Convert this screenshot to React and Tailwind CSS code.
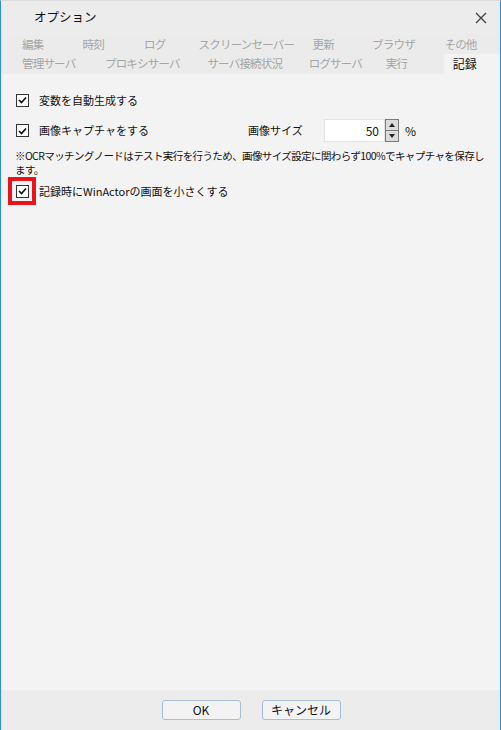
import React from 'react';

const font = { fontFamily: '"Noto Sans CJK JP", "Noto Sans", sans-serif' };

const tabsTop = [
    { label: '編集', w: 'w-[61px]' },
    { label: '時刻', w: 'w-[62px]' },
    { label: 'ログ', w: 'w-[55px]' },
    { label: 'スクリーンセーバー', w: 'w-[115px]' },
    { label: '更新', w: 'w-[60px]' },
    { label: 'ブラウザ', w: 'w-[73px]' },
    { label: 'その他', w: 'w-[56px]' },
];

const tabsBottom = [
    { label: '管理サーバ', w: 'w-[86px]' },
    { label: 'プロキシサーバ', w: 'w-[100px]' },
    { label: 'サーバ接続状況', w: 'w-[111px]' },
    { label: 'ログサーバ', w: 'w-[80px]' },
    { label: '実行', w: 'w-[60px]' },
];

const Check = () => (
    <div className="w-[13px] h-[13px] border border-[#333] bg-white flex items-center justify-center shrink-0">
        <svg width="9" height="8" viewBox="0 0 9 8">
            <path d="M1 4 L3.5 6.5 L8 1.5" fill="none" stroke="#111" strokeWidth="1.7" />
        </svg>
    </div>
);

export default function App() {
    return (
        <div style={font} className="w-[501px] h-[730px] flex flex-col bg-[#f3f3f3] border-x border-[#2a8ce8] border-t border-t-[#dcdcdc] text-[#111] overflow-hidden">
            {/* title bar */}
            <div className="h-[33px] bg-[#ececec] flex items-center justify-between pl-[33px] pr-[13px] shrink-0">
                <span className="text-[12.5px]">オプション</span>
                <svg width="12" height="12" viewBox="0 0 12 12">
                    <path d="M1 1 L11 11 M11 1 L1 11" stroke="#444" strokeWidth="1.4" />
                </svg>
            </div>

            {/* tabs */}
            <div className="bg-[#ebebeb] pl-[21px] pt-[1px] text-[11.5px] tracking-[-0.8px] text-[#a5a5a5] shrink-0">
                <div className="flex h-[19px] items-center">
                    {tabsTop.map((t) => (
                        <div key={t.label} className={`${t.w} whitespace-nowrap`}>{t.label}</div>
                    ))}
                </div>
                <div className="flex h-[20px] items-center">
                    {tabsBottom.map((t, i) => (
                        <div key={t.label} className={`${t.w} whitespace-nowrap ${i === 2 ? 'pl-[6px]' : ''}`}>{t.label}</div>
                    ))}
                    <div className="bg-[#f3f3f3] h-full w-[58px] flex items-center pl-[9px] text-[#111] text-[12px] tracking-normal">記録</div>
                </div>
            </div>

            {/* content */}
            <div className="flex-1 text-[11px] pt-[18px]">
                <div className="flex items-center gap-[10px] pl-[15px] h-[16px]">
                    <Check />
                    <span>変数を自動生成する</span>
                </div>
                <div className="flex items-center pl-[15px] mt-[11px] h-[23px]">
                    <Check />
                    <span className="ml-[10px] w-[209px]">画像キャプチャをする</span>
                    <span className="w-[76px]">画像サイズ</span>
                    <div className="flex h-[23px]">
                        <div className="w-[61px] bg-white border border-[#e3e3e3] flex items-center justify-end pr-[5px] text-[12px]">50</div>
                        <div className="flex flex-col w-[14px] border border-[#7a7a7a]">
                            <div className="flex-1 bg-[#dcdcdc] flex items-center justify-center border-b border-[#7a7a7a]">
                                <svg width="6" height="4" viewBox="0 0 6 4"><path d="M0 4 L3 0 L6 4 Z" fill="#222" /></svg>
                            </div>
                            <div className="flex-1 bg-[#dcdcdc] flex items-center justify-center">
                                <svg width="6" height="4" viewBox="0 0 6 4"><path d="M0 0 L6 0 L3 4 Z" fill="#222" /></svg>
                            </div>
                        </div>
                    </div>
                    <span className="ml-[6px] text-[12px]">%</span>
                </div>
                <div className="pl-[14px] mt-[7px] text-[10.5px] leading-[14px] whitespace-nowrap tracking-[-0.6px]">
                    ※OCRマッチングノードはテスト実行を行うため、画像サイズ設定に関わらず100%でキャプチャを保存し
                    <br />
                    ます。
                </div>
                <div className="flex items-center ml-[7px] mt-[0px]">
                    <div className="w-[28px] h-[28px] border-[4px] border-[#e8141b] flex items-center justify-center">
                        <Check />
                    </div>
                    <span className="ml-[3px]">記録時にWinActorの画面を小さくする</span>
                </div>
            </div>

            {/* footer */}
            <div className="h-[40px] bg-[#ececec] flex items-start justify-center gap-[21px] pt-[10px] pl-[1px] shrink-0">
                <button className="w-[79px] h-[20px] bg-[#f3f3f3] border border-[#a9bdd6] rounded-[3px] text-[12px] leading-none">OK</button>
                <button className="w-[79px] h-[20px] bg-[#f3f3f3] border border-[#a9bdd6] rounded-[3px] text-[12px] leading-none">キャンセル</button>
            </div>
        </div>
    );
}
